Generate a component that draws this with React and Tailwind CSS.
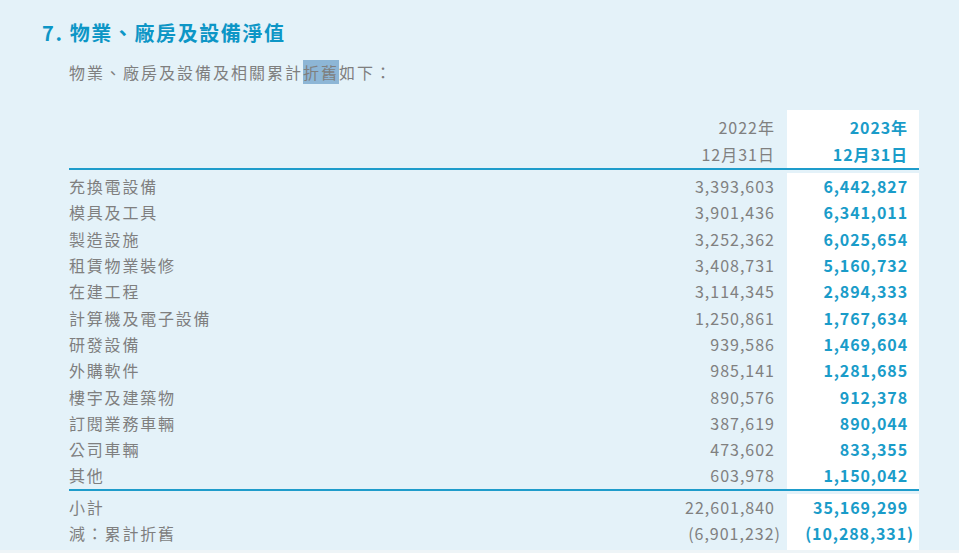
const ROWS = [
  ['充換電設備', '3,393,603', '6,442,827'],
  ['模具及工具', '3,901,436', '6,341,011'],
  ['製造設施', '3,252,362', '6,025,654'],
  ['租賃物業裝修', '3,408,731', '5,160,732'],
  ['在建工程', '3,114,345', '2,894,333'],
  ['計算機及電子設備', '1,250,861', '1,767,634'],
  ['研發設備', '939,586', '1,469,604'],
  ['外購軟件', '985,141', '1,281,685'],
  ['樓宇及建築物', '890,576', '912,378'],
  ['訂閱業務車輛', '387,619', '890,044'],
  ['公司車輛', '473,602', '833,355'],
  ['其他', '603,978', '1,150,042'],
];

const TOTALS = [
  ['小計', '22,601,840', '35,169,299', false],
  ['減：累計折舊', '(6,901,232)', '(10,288,331)', true],
];

const font = { fontFamily: '"Noto Sans CJK TC", "Liberation Sans", sans-serif' };

function Row({ label, prev, curr, paren }) {
  return (
    <div className="flex h-[26.3px] items-center">
      <div className="flex-1 text-[16px] tracking-[1.8px] text-[#7f7f7f]">{label}</div>
      <div
        className={`w-[118px] text-right text-[16px] tracking-[1px] text-[#808080] ${paren ? 'pr-[6px]' : 'pr-[12px]'}`}
      >
        {prev}
      </div>
      <div
        className={`w-[132px] self-stretch flex items-center justify-end bg-white text-[16px] font-bold tracking-[0.9px] text-[#1a9cc9] ${paren ? 'pr-[5px]' : 'pr-[11px]'}`}
      >
        {curr}
      </div>
    </div>
  );
}

export default function App() {
  return (
    <div className="w-[959px] h-[553px] overflow-hidden bg-[#e4f2f9] flex flex-col" style={font}>
      <div className="pt-[20px] pl-[42px] text-[20px] leading-[26px] font-bold tracking-[1.6px] text-[#0d96c6]">
        7.&nbsp;物業、廠房及設備淨值
      </div>
      <div className="pt-[15px] pl-[69px] text-[16px] leading-[22px] tracking-[2px] text-[#7f7f7f]">
        物業、廠房及設備及相關累計<span className="bg-[#8db6d6]">折舊</span>如下：
      </div>

      <div className="ml-[69px] mt-[27px] w-[850px] flex-1 flex flex-col">
        <div className="flex h-[58px] leading-[26.5px] text-[16px]">
          <div className="flex-1" />
          <div className="w-[118px] pt-[4px] pr-[12px] text-right tracking-[1px] text-[#808080]">
            <div>2022年</div>
            <div>12月31日</div>
          </div>
          <div className="w-[132px] pt-[4px] pr-[11px] text-right bg-white font-bold tracking-[0.9px] text-[#1a9cc9]">
            <div>2023年</div>
            <div>12月31日</div>
          </div>
        </div>
        <div className="h-[2px] bg-[#1e9ccb]" />
        <div className="flex pt-[3px]">
          <div className="flex-1 flex flex-col">
            {ROWS.map(([l, a, b]) => (
              <Row key={l} label={l} prev={a} curr={b} />
            ))}
          </div>
        </div>
        <div className="h-[2px] bg-[#1e9ccb]" />
        <div className="flex-1 flex flex-col pt-[3px]">
          {TOTALS.map(([l, a, b, p]) => (
            <Row key={l} label={l} prev={a} curr={b} paren={p} />
          ))}
          <div className="flex-1 flex">
            <div className="flex-1" />
            <div className="w-[132px] bg-white" />
          </div>
        </div>
      </div>
      <div className="h-[3px] bg-[#eef4f7]" />
    </div>
  );
}
